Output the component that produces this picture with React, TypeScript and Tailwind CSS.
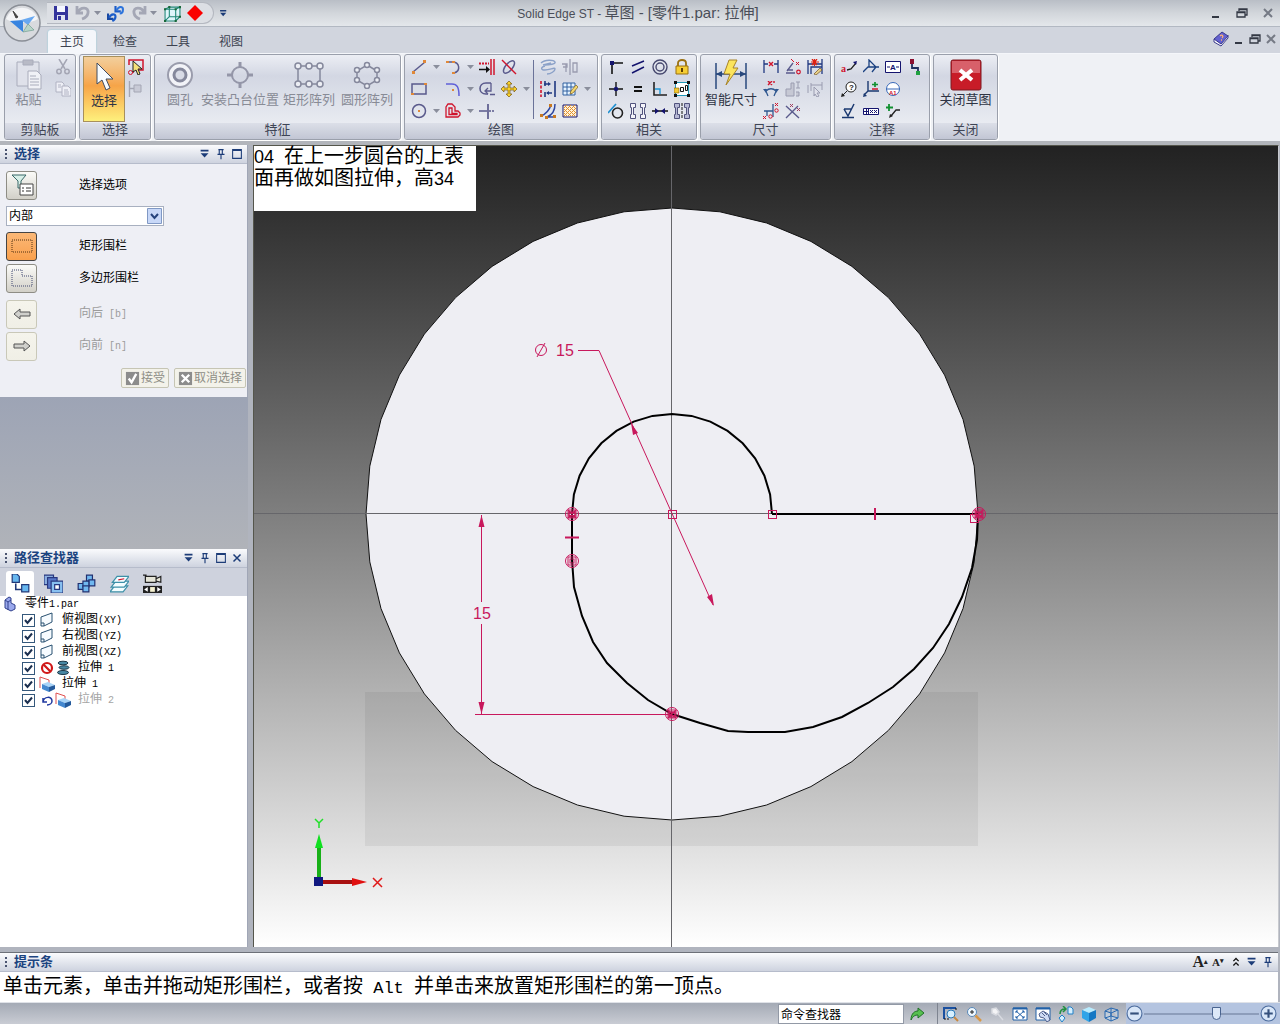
import React, { type ReactNode } from 'react';

const NAVY = '#14146e';
const SLATE = '#5a5a8c';
const RED = '#d0142c';
const DIM = '#9a9cb0';

const art: Record<string, ReactNode> = {
  save: (
    <g>
      <path d="M1 1h13l1 1v13H1z" fill="#34349c" />
      <path d="M4 1h8v6H4z" fill="#f4f6ff" />
      <path d="M4 10h8v5H4z" fill="#dfe3f2" />
      <path d="M5 11h3v4H5z" fill="#34349c" />
    </g>
  ),
  undo: <path d="M2 1v7h6M2.500 7.500C6 1 14 2 13 8c-.5 3-3 5-6 6" stroke="#a4a7b5" strokeWidth="2.800" />,
  redo: <path d="M14 1v7H8M13.500 7.500C10 1 2 2 3 8c.5 3 3 5 6 6" stroke="#a4a7b5" strokeWidth="2.800" />,
  swap: (
    <g strokeWidth="2">
      <path d="M8 1v5h5" stroke="#1c5cc8" />
      <path d="M9 5c2-4 6-4 6-1 0 2-1 4-3 4" stroke="#2c74dc" />
      <path d="M1 8v5h5" stroke="#1848a0" />
      <path d="M2 12c2-4 6-4 6-1 0 2-1 3-3 4" stroke="#1c5cc8" />
    </g>
  ),
  box: (
    <g stroke="#208878">
      <path d="M1 4l4-2h10v9l-4 4H1zM1 4h10v11M11 4l4-2M5 2v9h10M5 11l-4 4" fill="#dff5fa" />
      <path d="M0 3h2v2H0zM4 1h2v2H4zM14 1h2v2h-2zM10 3h2v2h-2zM0 14h2v2H0zM10 14h2v2h-2zM14 10h2v2h-2z" fill="#186838" stroke="none" />
    </g>
  ),
  record: <path d="M8 0l8 8-8 8-8-8z" fill="#fa0000" />,
  cut: (
    <g stroke="#a4a6b4" strokeWidth="1.500">
      <path d="M4 0l6 10M12 0L6 10" />
      <circle cx="4" cy="12.500" r="2.200" />
      <circle cx="12" cy="12.500" r="2.200" />
    </g>
  ),
  copy: (
    <g stroke="#b0b2c2" fill="#eeeff6">
      <path d="M1 1h6l2 2v8H1z" />
      <path d="M7 5h6l3 3v7H7zM9 9h4M9 11h5M9 13h5M3 4h3M3 6h3" />
    </g>
  ),
  selectTool: (
    <g>
      <path d="M1 6V1h14v10h-4M6 13H4" stroke={RED} strokeWidth="1.500" />
      <circle cx="2.500" cy="13.500" r="2" stroke={RED} />
      <path d="M5 2l9 8h-4l2 5-2 1-2-5-3 2z" fill="#f6e27a" stroke="#222" />
    </g>
  ),
  tree: (
    <g stroke="#a4a6b4">
      <path d="M1.500 0v16M1 7.500h5" strokeWidth="1.400" />
      <path d="M6 4h7v7H6z" fill="#c8cad6" />
    </g>
  ),
  line: (
    <g>
      <path d="M2 13L14 3" stroke={SLATE} strokeWidth="1.500" />
      <path d="M1 12h3v3H1zM12 1h3v3h-3z" fill="#e08838" />
    </g>
  ),
  arc: (
    <g>
      <path d="M2 3h5c8 0 9 9 2 11" stroke={SLATE} strokeWidth="1.500" />
      <path d="M1 2h3v2H1zM7 2h3v2H7zM7 13h3v2H7z" fill="#e08838" />
    </g>
  ),
  extend: (
    <g>
      <path d="M12 0v16M15 0v16" stroke={RED} strokeWidth="1.500" />
      <path d="M0 4.500h10" stroke={RED} strokeWidth="2" strokeDasharray="2 1" />
      <path d="M0 10.500h9" stroke="#111" strokeWidth="1.500" />
      <path d="M7 7l4 3.500L7 14z" fill="#111" />
    </g>
  ),
  trim: (
    <g>
      <ellipse cx="8" cy="8" rx="3.500" ry="7.500" transform="rotate(40 8 8)" stroke={SLATE} strokeWidth="1.500" />
      <path d="M1 1l14 14" stroke={RED} strokeWidth="1.500" />
    </g>
  ),
  rect: (
    <g>
      <path d="M1 3h14v10H1z" stroke={SLATE} strokeWidth="1.500" />
      <path d="M0 12h3v2H0zM13 2h3v2h-3z" fill="#e08838" />
    </g>
  ),
  fillet: (
    <g>
      <path d="M1 3h6c5 0 7 3 7 12" stroke="#6060d8" strokeWidth="1.500" />
      <path d="M7 8h2v2H7z" fill="#e08838" />
    </g>
  ),
  trimCorner: (
    <g stroke={SLATE} strokeWidth="1.600">
      <path d="M12 2H7C-1 2 -1 13 7 13h2M11 13.500h5" />
      <path d="M12 2v8H7M9 7l-3 3 3 3" strokeWidth="1.300" />
    </g>
  ),
  move: <path d="M8 0l3 3H9v4h4V5l3 3-3 3V9H9v4h2l-3 3-3-3h2V9H3v2L0 8l3-3v2h4V3H5z" fill="#fad22c" stroke="#7a5a10" strokeWidth=".7" />,
  circle: (
    <g>
      <circle cx="8" cy="8" r="6.500" stroke={SLATE} strokeWidth="1.500" />
      <path d="M7 7h2v2H7z" fill="#e08838" />
    </g>
  ),
  offset: (
    <g strokeWidth="1.300">
      <path d="M1 14V4l2-3h4l3 3v4h3l2 2v2l-2 2z" stroke={RED} />
      <path d="M4 11.500V5h3v5.500h5v1z" stroke={RED} />
    </g>
  ),
  cross: (
    <g stroke={SLATE} strokeWidth="1.700">
      <path d="M0 8h8M9 1v15" />
      <path d="M10 8h6" strokeDasharray="2 1" />
    </g>
  ),
  project: (
    <g stroke="#8ba1c8" strokeWidth="1.400">
      <path d="M1 4c4-4 13-3 14-1s-6 3-10 3" />
      <path d="M5 7c-4 1-5 4 0 4s10-3 10-1-4 5-8 5" />
      <path d="M3 6l8-2" />
    </g>
  ),
  mirror: <path d="M8 0v16M0 5h5v3H1M11 4h4v9h-4zM4 5v8" stroke={DIM} strokeWidth="1.300" />,
  spacing: (
    <g strokeWidth="1.600">
      <path d="M1 0v16" stroke={RED} strokeDasharray="3 1.500" />
      <path d="M15 0v16M5 0v5M5 11v5M4 3h5M12 12H7" stroke="#203880" />
      <path d="M8 1l3 2-3 2zM9 10l-3 2 3 2z" fill="#203880" />
    </g>
  ),
  grid: (
    <g>
      <path d="M1 2h12v12H1zM5 2v12M9 2v12M1 6h12M1 10h12" stroke="#3060a0" fill="#e4f2ff" />
      <path d="M8 13l1-3 5-6 2 2-5 6z" fill="#f4d870" stroke="#806020" strokeWidth=".7" />
    </g>
  ),
  curves: (
    <g>
      <path d="M15 1c0 7-3 11-8 13h8M11 2C9 8 6 11 1 13" stroke="#3048a0" strokeWidth="1.500" />
      <path d="M0 11h3v3H0zM13 12h3v3h-3zM5 13h3v3H5zM9 1h3v3H9z" fill="#c87820" />
    </g>
  ),
  hatch: (
    <g>
      <path d="M1 2h14v12H1z" fill="#fff2d8" stroke={NAVY} />
      <path d="M2 5l3-3M2 9l7-7M2 13l11-11M6 13l8-8M10 13l4-4M2 10l3 3M2 6l7 7M3 3l10 10M7 3l7 7M11 3l3 3" stroke="#e09030" />
    </g>
  ),
  connect: (
    <g>
      <path d="M4 15V4h11" stroke="#111" strokeWidth="1.600" />
      <path d="M2 2h4v4H2z" fill={NAVY} />
    </g>
  ),
  parallel: <path d="M2 7l12-5M2 14l12-6" stroke={NAVY} strokeWidth="1.500" />,
  concentric: (
    <g stroke="#484a70" strokeWidth="1.400">
      <circle cx="8" cy="8" r="7" />
      <circle cx="8" cy="8" r="4" />
    </g>
  ),
  lock: (
    <g>
      <path d="M4 7V4c0-4 8-4 8 0v3" stroke="#9a7010" strokeWidth="1.800" />
      <path d="M2 7h12v8H2z" fill="#f6ce34" stroke="#9a7010" />
      <path d="M7 9h2v4H7z" fill="#604000" />
    </g>
  ),
  plusRel: (
    <g>
      <path d="M8 1v14M1 8h14" stroke="#111" strokeWidth="1.400" />
      <circle cx="8" cy="8" r="2.200" fill={NAVY} />
    </g>
  ),
  equal: <path d="M4 6h8M4 10h8" stroke="#111" strokeWidth="2" />,
  perp: (
    <g>
      <path d="M2 1v13h13" stroke="#222" strokeWidth="1.600" />
      <path d="M3 8h5v5" stroke="#2098d8" strokeWidth="1.400" />
    </g>
  ),
  group: (
    <g>
      <path d="M1.500 1.500h13v13h-13z" stroke="#2098b8" fill="#fff" />
      <path d="M0 0h3v3H0zM13 0h3v3h-3zM0 13h3v3H0zM13 13h3v3h-3z" fill="#111" />
      <path d="M6.500 6.500h3v4h-3zM11.500 4.500h2v5h-2z" stroke="#111" />
      <path d="M0 7h5v5H0z" fill="#f4c830" stroke="#80600c" strokeWidth=".6" />
    </g>
  ),
  tangent: (
    <g>
      <circle cx="9.500" cy="10" r="5" stroke="#222" strokeWidth="1.600" />
      <path d="M0 10L8 1" stroke="#2090d0" strokeWidth="1.700" />
    </g>
  ),
  symmetric: <path d="M.5.500h5v4h-2v7h2v4h-5v-4h1v-7h-1zM15.500.500h-5v4h2v7h-2v4h5v-4h-1v-7h1z" stroke="#50527c" fill="#f4f4fa" />,
  collinear: (
    <g>
      <path d="M0 8h16" stroke="#111" strokeWidth="1.300" />
      <path d="M3 5l4 3-4 3zM13 5L9 8l4 3z" fill={NAVY} />
    </g>
  ),
  symAxis: (
    <g>
      <path d="M.5.500h5v4h-2v7h2v4h-5v-4h1v-7h-1zM15.500.500h-5v4h2v7h-2v4h5v-4h-1v-7h1z" stroke="#50527c" fill="#b6b8d4" />
      <path d="M8 0v16" stroke="#111" strokeDasharray="3 1" />
    </g>
  ),
  distance: (
    <g>
      <path d="M1 1v13M15 1v13M1 5h4M11 5h4" stroke="#203880" strokeWidth="1.300" />
      <path d="M6 3l4 4M10 3L6 7" stroke={RED} strokeWidth="1.400" />
    </g>
  ),
  angleDim: (
    <g>
      <path d="M1 14h9M2 12l6-8M2 11h6" stroke={SLATE} strokeWidth="1.300" />
      <path d="M11 3l3 3M14 3l-3 3M6 0l3 3" stroke={RED} />
      <circle cx="13.500" cy="13" r="1.800" stroke={RED} strokeWidth="1.200" />
    </g>
  ),
  autoDim: (
    <g>
      <path d="M1 1v14M1 5h14M15 0v15M4 15V8h11" stroke="#203880" strokeWidth="1.300" />
      <path d="M5 0l5 6M10 0L5 6M7.500 0v7M4 3h8" stroke="#e02010" strokeWidth="1.200" />
      <path d="M7 15l6-6 2 2-6 5z" fill="#e8d088" stroke="#705020" strokeWidth=".7" />
    </g>
  ),
  angle: (
    <g>
      <path d="M2 8l3 7M14 8l-3 7M3 10c3-3 7-3 10 0" stroke="#305890" strokeWidth="1.300" />
      <path d="M0 8h4l-1 4zM16 8h-4l1 4z" fill="#305890" />
      <path d="M5 0l4 4M9 0L5 4M11 0v2" stroke={RED} strokeWidth="1.400" />
    </g>
  ),
  coordDim: <path d="M1 15V8h5V2h3v13zM11 1h4M13 1v6M11 7h4M11 11h3v4h-3" stroke={DIM} fill="#c6c8d4" />,
  pickDim: <path d="M1 4v8M4 2v8M15 1v8M4 4h11M7 6l6 6h-3l2 3-2 1-2-3-1 2z" stroke={DIM} fill="#dfe0ea" />,
  ordDim: (
    <g>
      <path d="M1 8h9M10 1v13M4 8v5" stroke="#305890" strokeWidth="1.300" />
      <path d="M12 0l3 3M15 0l-3 3M0 13l3 3M3 13l-3 3" stroke={RED} />
      <circle cx="13.500" cy="7.500" r="1.700" stroke={RED} />
      <circle cx="7.500" cy="13.500" r="1.700" stroke={RED} />
    </g>
  ),
  detach: (
    <g>
      <path d="M1 3l13 12M13 3L1 15" stroke={SLATE} strokeWidth="1.400" />
      <path d="M5 1l3 3M8 1L5 4M12 5l3 3M15 5l-3 3" stroke="#a04060" />
    </g>
  ),
  leader: (
    <g>
      <path d="M6 11l4-1 5-6" stroke="#222" strokeWidth="1.300" />
      <path d="M16 2l-1 4-3-3z" fill={NAVY} />
      <text x="0" y="13" fontSize="10" fontWeight="700" fill={RED} fontFamily="Liberation Serif, serif">a</text>
    </g>
  ),
  datum: <path d="M0 13l5-5h11M6 8V1l7 7-4 5" stroke="#1a4080" strokeWidth="1.300" />,
  frame: (
    <g>
      <path d="M.5 2.500h15v11H.5z" fill="#fff" stroke={NAVY} />
      <path d="M2 8h3M11 8h3" stroke={NAVY} />
      <text x="5" y="11" fontSize="8" fontWeight="700" fill={NAVY} fontFamily="Liberation Sans, sans-serif">A</text>
    </g>
  ),
  connector: (
    <g>
      <path d="M5 3v6h6v4" stroke="#203060" strokeWidth="1.800" />
      <path d="M3 0h4v5H3z" fill="#8c1030" />
      <path d="M9 12h4v4H9z" fill="#20a040" />
    </g>
  ),
  balloon: (
    <g>
      <circle cx="10" cy="6" r="5" stroke="#222" fill="#fff" />
      <path d="M6 10l-4 4" stroke="#222" />
      <path d="M0 16l1-4 3 3z" fill="#222" />
      <text x="8" y="9" fontSize="8" fontWeight="700" fill="#222" fontFamily="Liberation Sans, sans-serif">?</text>
    </g>
  ),
  tolerance: (
    <g>
      <path d="M5 0v10h11M5 10l-4 4" stroke="#1a3870" strokeWidth="1.400" />
      <path d="M0 16l1-4 3 3z" fill="#1a3870" />
      <path d="M12 1v5M9 3.500h6" stroke="#109030" strokeWidth="1.700" />
      <path d="M9 8h6" stroke={RED} strokeWidth="1.500" />
    </g>
  ),
  datumTarget: (
    <g>
      <circle cx="8" cy="8" r="6.500" stroke="#3868b8" fill="#fff" />
      <path d="M1 8h14" stroke="#3868b8" />
      <text x="4" y="14" fontSize="6" fontWeight="700" fill={RED} fontFamily="Liberation Sans, sans-serif">A1</text>
    </g>
  ),
  surface: <path d="M1 14.500h12M3 6l4 7 6-12M3 6h8" stroke="#1a3870" strokeWidth="1.500" />,
  fcf: (
    <g stroke={NAVY}>
      <path d="M.5 5.500h15v6H.5zM5.500 5v6" fill="#fff" />
      <path d="M1 8.500h4M3.500 6v5M7 7l3 3M10 7l-3 3M11 7l3 3M14 7l-3 3" />
    </g>
  ),
  addLeader: (
    <g>
      <path d="M15 7h-4l-5 6" stroke="#222" strokeWidth="1.300" />
      <path d="M4 15l1-4 3 2z" fill="#222" />
      <path d="M4 1v7M1 4.500h7" stroke="#109030" strokeWidth="1.800" />
    </g>
  ),
  help: (
    <g>
      <path d="M1 8v3l7 4 7-8V4" fill="#fff" stroke="#38388c" />
      <path d="M1 8l8-7 6 4-7 8z" fill="#6462d0" stroke="#38388c" />
      <path d="M7 5c2-2 4 0 2 2M8 9h1" stroke="#ffb070" strokeWidth="1.300" />
    </g>
  ),
  min: <path d="M4 12h7" stroke="#333844" strokeWidth="2" />,
  restore: <path d="M5 6V4h8v6h-2M3 7h8v5H3zM5 4.500h8M3 7.500h8" stroke="#333844" strokeWidth="1.300" />,
  close: <path d="M4 4l8 8M12 4l-8 8" stroke="#757a85" strokeWidth="2" />,
  drop: (
    <g fill="#1c3c78">
      <path d="M3 3h9v2H3zM3 7h9l-4.500 5z" />
    </g>
  ),
  pin: <path d="M5 3h6M6 3v5M9.500 3v5M4 8.500h8M8 9v5" stroke="#1c3c78" strokeWidth="1.300" />,
  max: <path d="M3 3h10v10H3zM3 4h10" stroke="#1c3c78" strokeWidth="1.200" />,
  shut: <path d="M4 4l8 8M12 4l-8 8" stroke="#1c3c78" strokeWidth="1.700" />,
  up2: <path d="M5 7l3-3 3 3M5 12l3-3 3 3" stroke="#111" strokeWidth="1.500" />,
  plane: <path d="M2 5l11-4v9L5 14H2zM2 11h3v3" stroke="#285070" fill="#f6fbff" />,
  part: <path d="M3 4l4-3 2 1v5l4 2v4l-4 2-6-3zM3 4l3 2v8M6 6l3-2" fill="#9aa8ec" stroke="#30408c" />,
  forbid: (
    <g stroke="#d01818" strokeWidth="2.200">
      <circle cx="8" cy="8" r="5" />
      <path d="M4.500 4.500l7 7" />
    </g>
  ),
  spring: (
    <g fill="#4888a4" stroke="#1c3848">
      <ellipse cx="8" cy="3" rx="5" ry="1.800" />
      <ellipse cx="9" cy="7.500" rx="5" ry="1.800" />
      <ellipse cx="8" cy="12.500" rx="5.500" ry="2" />
    </g>
  ),
  extrude: (
    <g>
      <path d="M1 12V1l9 3v4" stroke="#e05050" />
      <path d="M3 8l6-2 7 3-6 2z" fill="#a8d4f8" />
      <path d="M3 8l7 3v5l-7-3z" fill="#4488d0" />
      <path d="M10 11l6-2v4l-6 3z" fill="#245a9c" />
    </g>
  ),
  back: <path d="M4 6v4h4M4 10c1-6 9-6 9-1 0 2-2 4-5 4" stroke="#2038a0" strokeWidth="1.500" />,
  go: <path d="M2 14C2 7 6 5 9 5V2l6 5-6 5V9c-3 0-5 1-7 5z" fill="#58c050" stroke="#207028" />,
  zoomArea: (
    <g>
      <path d="M1 13V2h12" stroke="#1a50a0" strokeWidth="2" />
      <path d="M1 13h6M13 2v3" stroke="#111" strokeDasharray="2 1" />
      <circle cx="8" cy="8" r="4" fill="#d6f0ff" stroke="#2878b8" />
      <path d="M11 11l4 4" stroke="#c88840" strokeWidth="2" />
    </g>
  ),
  zoom: (
    <g>
      <circle cx="6" cy="6" r="4.500" fill="#eef8ff" stroke="#5888b8" />
      <path d="M4 6h4M6 4v4" stroke="#222" />
      <path d="M9.500 9.500L15 15" stroke="#d89848" strokeWidth="2.500" />
    </g>
  ),
  wand: <path d="M3 3l4-1 3 4-3 3-4-2zM9 8l5 6" stroke="#d8dae0" fill="#f4f4f6" strokeWidth="1.500" />,
  fit: (
    <g>
      <path d="M1 2h14v12H1z" fill="#fff" stroke="#2060a8" />
      <path d="M1 2.500h14" stroke="#2060a8" strokeWidth="2" />
      <path d="M4 5l8 7M12 5l-8 7M4 7V5h2M12 7V5h-2M4 10v2h2M12 10v2h-2" stroke="#2060a8" />
    </g>
  ),
  pan: (
    <g>
      <path d="M1 2h14v12H1z" fill="#fff" stroke="#2060a8" />
      <path d="M1 2.500h14" stroke="#2060a8" strokeWidth="2" />
      <path d="M4 8l4-3 5 3 2 6-3 2-3-4-4-1zM7 7l3 3M9 6l3 3" fill="#d0dcf4" stroke="#50608c" />
    </g>
  ),
  rotate: (
    <g>
      <path d="M2 8c0-4 2-5 5-5M5 0l3 3-3 3" stroke="#209040" strokeWidth="1.500" />
      <path d="M10 1h3l2 2v5h-5zM1 12l3-3 3 3-3 4z" fill="#d4efff" stroke="#2080c8" />
    </g>
  ),
  cube: (
    <g>
      <path d="M8 1l7 3-7 3-7-3z" fill="#b8ecff" />
      <path d="M1 4l7 3v9l-7-4z" fill="#30a4e8" />
      <path d="M15 4L8 7v9l7-4z" fill="#1478c4" />
    </g>
  ),
  wire: <path d="M1 5l6 2v8l-6-3zM7 7l7-3v8l-7 3M1 5l6-3 7 2M7 2v8l7 2M7 10l-6 2" stroke="#2868b0" fill="#cfe6fa" fillOpacity=".4" />,
  minus: (
    <g>
      <circle cx="8" cy="8" r="7" fill="#d8e6f8" stroke="#4a6a9c" />
      <path d="M4 8h8" stroke="#34507c" strokeWidth="2" />
    </g>
  ),
  plus: (
    <g>
      <circle cx="8" cy="8" r="7" fill="#d8e6f8" stroke="#4a6a9c" />
      <path d="M4 8h8M8 4v8" stroke="#34507c" strokeWidth="2" />
    </g>
  ),
  tabTree: (
    <g>
      <path d="M4 8v5h5" stroke="#203878" strokeWidth="1.300" />
      <path d="M1 0h4l2 2v5H1zM9 9h6v6H9z" fill="#68b8f0" stroke="#203878" />
    </g>
  ),
  tabLib: (
    <g stroke="#283880">
      <path d="M0 1h8v8H0z" fill="#8cb0e0" />
      <path d="M3 3h8v9H3z" fill="#5878c8" />
      <path d="M6 6h10v10H6z" fill="#88c0f0" />
      <path d="M9 9h4v4H9z" fill="#fff" />
    </g>
  ),
  tabFamily: (
    <g fill="#70b8f0" stroke="#203070">
      <path d="M8 1h5v5H8z" />
      <path d="M10 5h5v5h-5z" />
      <path d="M1 8h5v5H1z" />
      <path d="M5 6h5v5H5z" />
      <path d="M5 10h5v5H5z" />
    </g>
  ),
  tabLayers: (
    <g fill="#f2fdff" stroke="#3c90a8">
      <path d="M0 15l4-5h11l-4 5z" />
      <path d="M1 11l4-5h11l-4 5z" />
      <path d="M2 7l4-5h10l-4 5z" />
      <path d="M7 5l5-1" stroke={RED} />
    </g>
  ),
  tabSensor: (
    <g>
      <path d="M2 2h9v5H2zM11 4l4-2v5l-4-1M0 1h3" stroke="#222" fill="#e6e6d8" />
      <path d="M0 10h16v6H0z" fill="#222" />
      <path d="M6 11h4v4H6z" fill="#f4f0d0" />
      <path d="M4 11v4l-3-2zM12 11v4l3-2z" fill="#fff" />
    </g>
  ),
};

function Icon({ name, className = 'size-4' }: { name: string; className?: string }) {
  return (
    <svg viewBox="0 0 16 16" fill="none" aria-hidden="true" className={`block shrink-0 ${className}`}>
      {art[name]}
    </svg>
  );
}

function Caret({ label }: { label: string }) {
  return (
    <button aria-label={label} className="grid h-[22px] w-3 place-items-center">
      <svg viewBox="0 0 7 4" className="h-1 w-[7px]" aria-hidden="true">
        <path d="M0 0h7L3.500 4z" fill="#8a8e9c" />
      </svg>
    </button>
  );
}

function Tool({ name, label, disabled }: { name: string; label: string; disabled?: boolean }) {
  return (
    <button aria-label={label} disabled={disabled} className="grid size-[22px] place-items-center">
      <Icon name={name} />
    </button>
  );
}

function Group({ title, className, children }: { title: string; className: string; children: ReactNode }) {
  return (
    <section
      aria-label={title}
      className={`flex shrink-0 flex-col overflow-hidden rounded-[3px] border border-[#9a9fab] bg-linear-to-b from-[#eceef4] from-0% via-[#d3d7e3] via-25% to-[#f0f2f6] shadow-[1px_1px_0_#fff] ${className}`}
    >
      <div className="flex flex-1 pt-px">{children}</div>
      <h2 className="h-4 bg-linear-to-b from-[#dcdfe8] to-[#c2c6d4] text-center text-[13px] leading-[14px] text-[#3f4555]">{title}</h2>
    </section>
  );
}

function BigButton({ label, disabled, className = '', children }: { label: string; disabled?: boolean; className?: string; children: ReactNode }) {
  return (
    <button
      disabled={disabled}
      className={`flex h-[66px] flex-col items-center pt-[2px] text-[13px] leading-4 whitespace-nowrap text-[#2e3444] disabled:text-[#888b96] ${className}`}
    >
      <span className="grid h-[34px] place-items-center">{children}</span>
      {label}
    </button>
  );
}

const drawTools: [string, string, boolean][][] = [
  [['line', '直线', true], ['arc', '圆弧', true], ['extend', '延伸', false], ['trim', '修剪', false]],
  [['rect', '矩形', false], ['fillet', '倒圆', true], ['trimCorner', '修剪拐角', false], ['move', '移动', true]],
  [['circle', '圆', true], ['offset', '偏置', true], ['cross', '分割', false]],
];
const relations = ['connect', 'parallel', 'concentric', 'lock', 'plusRel', 'equal', 'perp', 'group', 'tangent', 'symmetric', 'collinear', 'symAxis'];
const dims = ['distance', 'angleDim', 'autoDim', 'angle', 'coordDim', 'pickDim', 'ordDim', 'detach'];
const notes = ['leader', 'datum', 'frame', 'connector', 'balloon', 'tolerance', 'datumTarget', '', 'surface', 'fcf', 'addLeader'];

function Ribbon() {
  return (
    <div className="flex h-[92px] gap-[3px] border-t border-b-4 border-t-[#f4f6fa] border-b-[#b2b5bb] bg-[#eff1f5] px-1 pb-px">
      <Group title="剪贴板" className="w-[72px]">
        <BigButton label="粘贴" disabled className="w-[47px]">
          <svg viewBox="0 0 28 32" className="h-8 w-7" fill="#dfe1ea" stroke="#a9acbb" aria-hidden="true">
            <path d="M2 3h22v24H2z" />
            <path d="M8 1h10v5H8z" fill="#b8bac6" />
            <path d="M13 12h9l4 4v14H13z" fill="#f0f1f6" />
            <path d="M15 17h6M15 20h9M15 23h9M15 26h9" />
          </svg>
        </BigButton>
        <div>
          <Tool name="cut" label="剪切" disabled />
          <Tool name="copy" label="复制" disabled />
        </div>
      </Group>
      <Group title="选择" className="w-[72px]">
        <BigButton
          label="选择"
          className="ml-[3px] w-[42px] border border-[#a8905c] bg-linear-to-b from-[#f2cf9c] via-[#f6a448] via-45% to-[#fdf07c]"
        >
          <svg viewBox="0 0 20 30" className="h-[30px] w-5" aria-hidden="true">
            <path d="M3 2v21l5-4 4 10 4-2-4-9h7z" fill="#f8fcff" stroke="#404c60" />
          </svg>
        </BigButton>
        <div>
          <Tool name="selectTool" label="选择工具" />
          <Tool name="tree" label="选择过滤器" disabled />
        </div>
      </Group>
      <Group title="特征" className="w-[247px]">
        <div className="flex gap-1 pl-2">
          <BigButton label="圆孔" disabled className="px-[3px]">
            <svg viewBox="0 0 28 28" className="size-7" fill="none" aria-hidden="true">
              <circle cx="14" cy="14" r="12" fill="#f2f3f8" stroke="#9a9cac" strokeWidth="2" />
              <circle cx="14" cy="14" r="6" fill="#d8dbe6" stroke="#85889c" strokeWidth="3" />
            </svg>
          </BigButton>
          <BigButton label="安装凸台位置" disabled>
            <svg viewBox="0 0 28 28" className="size-7" fill="none" stroke="#9496a8" strokeWidth="2" aria-hidden="true">
              <circle cx="14" cy="14" r="8" />
              <path d="M14 1v6M14 21v6M1 14h6M21 14h6" strokeWidth="3" />
            </svg>
          </BigButton>
          <BigButton label="矩形阵列" disabled>
            <svg viewBox="0 0 30 28" className="h-7 w-[30px]" fill="#eceef4" stroke="#85889c" strokeWidth="1.500" aria-hidden="true">
              <path d="M4 5h22v18H4z" fill="none" />
              {[4, 15, 26].map((x) => (
                <g key={x}>
                  <circle cx={x} cy="5" r="3" />
                  <circle cx={x} cy="23" r="3" />
                </g>
              ))}
            </svg>
          </BigButton>
          <BigButton label="圆形阵列" disabled className="ml-[2px]">
            <svg viewBox="0 0 28 28" className="size-7" fill="#eceef4" stroke="#85889c" strokeWidth="1.500" aria-hidden="true">
              <path d="M14 4l10 6v9l-10 6-10-6v-9z" fill="none" />
              <circle cx="14" cy="4" r="2.500" />
              <circle cx="24" cy="9" r="2.500" />
              <circle cx="24" cy="19" r="2.500" />
              <circle cx="14" cy="25" r="2.500" />
              <circle cx="4" cy="19" r="2.500" />
              <circle cx="4" cy="9" r="2.500" />
            </svg>
          </BigButton>
        </div>
      </Group>
      <Group title="绘图" className="w-[194px]">
        <div className="grid auto-rows-[22px] grid-cols-[34px_34px_22px_34px] pl-[3px]">
          {drawTools.flat().map(([name, label, more]) => (
            <div key={name} className="flex">
              <Tool name={name} label={label} />
              {more && <Caret label={`${label}选项`} />}
            </div>
          ))}
        </div>
        <div className="my-1 mr-[3px] ml-px w-px bg-[#6a7298]" />
        <div className="grid auto-rows-[22px] grid-cols-[22px_34px] content-start">
          <Tool name="project" label="投影到草图" disabled />
          <Tool name="mirror" label="镜像" disabled />
          <Tool name="spacing" label="拉伸" />
          <div className="flex">
            <Tool name="grid" label="网格" />
            <Caret label="网格选项" />
          </div>
          <Tool name="curves" label="转换为曲线" />
          <Tool name="hatch" label="填充" />
        </div>
      </Group>
      <Group title="相关" className="w-[96px]">
        <div className="grid auto-rows-[22px] grid-cols-4 pl-[3px]">
          {relations.map((n) => (
            <Tool key={n} name={n} label={n} />
          ))}
        </div>
      </Group>
      <Group title="尺寸" className="w-[131px]">
        <BigButton label="智能尺寸" className="ml-1">
          <svg viewBox="0 0 32 32" className="size-8" aria-hidden="true">
            <path d="M1 4v26M31 4v26M1 15h30" stroke="#28487c" strokeWidth="1.500" />
            <path d="M1 15l6-3v6zM31 15l-6-3v6z" fill="#28487c" />
            <path d="M14 1h8l-4 8h5L11 26l4-11H9z" fill="#fbe45c" stroke="#a88428" />
          </svg>
        </BigButton>
        <div className="grid auto-rows-[22px] grid-cols-3 pl-[3px]">
          {dims.map((n) => (
            <Tool key={n} name={n} label={n} />
          ))}
        </div>
      </Group>
      <Group title="注释" className="w-[96px]">
        <div className="grid auto-rows-[22px] grid-cols-4 pl-[3px]">
          {notes.map((n, i) => (n ? <Tool key={n} name={n} label={n} /> : <span key={i} />))}
        </div>
      </Group>
      <Group title="关闭" className="w-[65px]">
        <BigButton label="关闭草图" className="w-full">
          <svg viewBox="0 0 32 32" className="size-8" aria-hidden="true">
            <rect x="1" y="1" width="30" height="30" rx="2" fill="#c81c28" stroke="#7c1820" />
            <path d="M2 2h28v12H2z" fill="#d8606a" />
            <path d="M10 11l12 10M22 11L10 21" stroke="#fff" strokeWidth="4" />
          </svg>
        </BigButton>
      </Group>
    </div>
  );
}

function Header({ title, icons, children }: { title: string; icons: string[]; children?: ReactNode }) {
  return (
    <header className="flex h-[19px] shrink-0 items-center border-b border-[#b6bccb] bg-linear-to-b from-[#fafbfd] to-[#ced3df] pr-[2px] pl-[5px]">
      <svg viewBox="0 0 2 10" className="h-[10px] w-[2px]" aria-hidden="true">
        <path d="M0 0h2v2H0zM0 4h2v2H0zM0 8h2v2H0z" fill="#4a5470" />
      </svg>
      <h2 className="ml-[7px] flex-1 text-[13px] leading-4 font-bold text-[#1c4480]">{title}</h2>
      {children}
      {icons.map((n) => (
        <button key={n} aria-label={n} className="grid w-4 place-items-center">
          <Icon name={n} className="size-[14px]" />
        </button>
      ))}
    </header>
  );
}

function OptionRow({ label, latin, disabled, pressed, children }: { label: string; latin?: string; disabled?: boolean; pressed?: boolean; children: ReactNode }) {
  return (
    <button disabled={disabled} aria-pressed={pressed} className="group flex h-[30px] items-center gap-[42px] text-black disabled:text-[#9b9b9b]">
      <span className="grid h-[29px] w-[31px] place-items-center rounded-[3px] border border-[#8e8d85] bg-linear-to-b from-[#fbfbf8] to-[#d2d0c8] group-disabled:border-[#c9c8b8] group-disabled:from-[#f5f4ec] group-disabled:to-[#f0efe6] group-aria-pressed:border-[#444] group-aria-pressed:from-[#fbb877] group-aria-pressed:to-[#f9a04c]">
        <svg viewBox="0 0 24 24" className="size-6" fill="none" aria-hidden="true">
          {children}
        </svg>
      </span>
      <span>
        {label}
        {latin && <span className="font-['Liberation_Mono',monospace] text-[10px] whitespace-pre"> {latin}</span>}
      </span>
    </button>
  );
}

function SelectPanel() {
  return (
    <section className="border-r border-[#a0a6b6] bg-[#eeeff5] text-[12px] leading-4">
      <Header title="选择" icons={['drop', 'pin', 'max']} />
      <div className="flex flex-col items-start px-[6px] pt-[6px] pb-[9px]">
        <OptionRow label="选择选项">
          <path d="M2 2h14l-5 6v7H8V8z" fill="#d8f0e8" stroke="#386868" />
          <path d="M10 11h13v11H10z" fill="#fff" stroke="#444" />
          <path d="M12 15h2M16 15h5M12 18h2M16 18h5" stroke="#333" />
        </OptionRow>
        <div className="mt-[6px] grid h-5 w-[158px] items-center">
          <select aria-label="选择范围" defaultValue="inner" className="col-start-1 row-start-1 h-5 w-full appearance-none border border-[#a8b0c0] bg-white pl-[2px] text-[12px]">
            <option value="inner">内部</option>
          </select>
          <svg viewBox="0 0 15 16" className="pointer-events-none col-start-1 row-start-1 mr-[2px] h-4 w-[15px] justify-self-end" aria-hidden="true">
            <path d="M.5.500h14v15H.5z" fill="#c8d8f8" stroke="#8098c4" />
            <path d="M4 6l3.500 4L11 6" fill="none" stroke="#26437c" strokeWidth="2" />
          </svg>
        </div>
        <div className="mt-[5px] flex flex-col items-start gap-[2px]">
          <OptionRow label="矩形围栏" pressed>
            <path d="M2 6h20v12H2z" stroke="#503010" strokeDasharray="1 1" />
          </OptionRow>
          <OptionRow label="多边形围栏">
            <path d="M2 4h10v6h10v10H2z" stroke="#404870" strokeDasharray="1 1" />
          </OptionRow>
        </div>
        <div className="mt-[6px] flex flex-col items-start gap-[2px]">
          <OptionRow label="向后" latin="[b]" disabled>
            <path d="M4 12l6-5v3h10v4H10v3z" fill="#d0d0cc" stroke="#555" />
          </OptionRow>
          <OptionRow label="向前" latin="[n]" disabled>
            <path d="M20 12l-6-5v3H4v4h10v3z" fill="#d0d0cc" stroke="#555" />
          </OptionRow>
        </div>
        <div className="-mr-[5px] mt-[7px] flex gap-[5px] self-end text-[#8e8e86]">
          {[
            ['接受', 'M4 8l3 4 5-9'],
            ['取消选择', 'M4 4l8 8M12 4l-8 8'],
          ].map(([label, d]) => (
            <button key={label} disabled className="flex h-5 items-center gap-px rounded-[2px] border border-[#c6c5b4] bg-[#f3f2ea] px-[3px] whitespace-nowrap">
              <svg viewBox="0 0 16 16" className="size-[15px]" aria-hidden="true">
                <path d="M1 1h14v14H1z" fill="#8c8c8c" />
                <path d={d} fill="none" stroke="#fff" strokeWidth="2.500" />
              </svg>
              {label}
            </button>
          ))}
        </div>
      </div>
    </section>
  );
}

const nodes: { icons: string[]; cjk: string; latin: string; dim?: boolean }[] = [
  { icons: ['plane'], cjk: '俯视图', latin: '(XY)' },
  { icons: ['plane'], cjk: '右视图', latin: '(YZ)' },
  { icons: ['plane'], cjk: '前视图', latin: '(XZ)' },
  { icons: ['forbid', 'spring'], cjk: '拉伸', latin: ' 1' },
  { icons: ['extrude'], cjk: '拉伸', latin: ' 1' },
  { icons: ['back', 'extrude'], cjk: '拉伸', latin: ' 2', dim: true },
];

function Pathfinder() {
  return (
    <section className="flex min-h-0 flex-1 flex-col border-r border-[#a0a6b6] bg-white text-[12px]">
      <Header title="路径查找器" icons={['drop', 'pin', 'max', 'shut']} />
      <div role="tablist" aria-label="路径查找器" className="flex h-7 items-end gap-[5px] bg-[#ced2dd] pl-[6px]">
        {['tabTree', 'tabLib', 'tabFamily', 'tabLayers', 'tabSensor'].map((n, i) => (
          <button key={n} role="tab" aria-selected={i === 0} aria-label={n} className="grid h-[25px] w-7 place-items-center rounded-t-[3px] aria-selected:bg-white">
            <Icon name={n} className="size-[19px]" />
          </button>
        ))}
      </div>
      <div className="flex h-4 items-center gap-[7px] pl-[2px]">
        <Icon name="part" />
        <span className="leading-4">
          零件<span className="font-['Liberation_Mono',monospace] text-[10px]">1.par</span>
        </span>
      </div>
      <ul>
        {nodes.map((n, i) => (
          <li key={i}>
            <label className={`flex h-4 items-center pl-[22px] leading-4 ${n.dim ? 'text-[#a4a4a4]' : 'text-black'}`}>
              <span className="mr-1 grid">
                <input type="checkbox" defaultChecked className="peer col-start-1 row-start-1 size-[13px] appearance-none border border-[#35597c] bg-white" />
                <svg viewBox="0 0 13 13" className="pointer-events-none invisible col-start-1 row-start-1 size-[13px] peer-checked:visible" fill="none" aria-hidden="true">
                  <path d="M3 6l2.500 3L10 3.500" stroke="#1c3050" strokeWidth="2" />
                </svg>
              </span>
              {n.icons.map((ic) => (
                <Icon key={ic} name={ic} />
              ))}
              <span className="ml-[7px]">
                {n.cjk}
                <span className="font-['Liberation_Mono',monospace] text-[10px] whitespace-pre">{n.latin}</span>
              </span>
            </label>
          </li>
        ))}
      </ul>
    </section>
  );
}

const ring = (r: number, n: number, from: number, to: number) =>
  Array.from({ length: to - from + 1 }, (_, i) => {
    const a = ((from + i) * 2 * Math.PI) / n;
    return `${(672 + r * Math.cos(a)).toFixed(1)},${(514 - r * Math.sin(a)).toFixed(1)}`;
  }).join(' ');

function Handle({ x, y, solid }: { x: number; y: number; solid?: boolean }) {
  return (
    <g stroke="#c8185c" fill="none">
      <circle cx={x} cy={y} r="6.500" />
      <rect x={x - 4} y={y - 4} width="8" height="8" />
      {solid ? (
        <path d={`M${x - 4} ${y - 4}l8 8M${x + 4} ${y - 4}l-8 8M${x - 3} ${y - 2}h6v5h-6z`} strokeWidth="1.500" />
      ) : (
        <rect x={x - 2} y={y - 2} width="4" height="4" />
      )}
    </g>
  );
}

function Canvas() {
  return (
    <main className="relative mr-px min-w-0 flex-1 border-t border-r border-l border-[#55564c] border-r-[#c8cacf] bg-linear-to-b from-[#222] to-white">
      <svg viewBox="254 146 1024 801" className="absolute inset-0 size-full" fill="none" role="img" aria-label="草图">
        <rect x="365" y="692" width="613" height="154" fill="#000" fillOpacity=".055" />
        <polygon points={ring(306, 40, 0, 39)} fill="#eeeef3" stroke="#111" />
        <path d="M254 513.500H1278M671.500 146V947" stroke="#66666a" />
        <g stroke="#000" strokeWidth="2">
          <polyline points={ring(100, 32, 0, 16)} />
          <path d="M772 514H978M572 514V560L574 587 582 616 593 642 607 663 627 683 648 700 672 714 700 723 728 731 748 732H785L813 727 842 717 868 703 893 687 914 669 933 648 949 624 962 597 972 568 977 540 978 514" />
        </g>
        <g stroke="#c8185c">
          <path d="M578 350.500H599L713 605M481.500 515V602M481.500 624V714M475 714.500H672" />
          <path d="M565 537.500H579M875 508V520" strokeWidth="2" />
          <g fill="#c8185c" stroke="none">
            <path d="M631 423l7 10-5 2zM714 606l-2-12-5 3zM481.500 515l3 12h-6zM481.500 714l3-12h-6z" />
          </g>
          <rect x="668.500" y="510.500" width="8" height="8" />
          <rect x="768.500" y="510.500" width="8" height="8" />
          <rect x="970.500" y="514.500" width="8" height="8" />
          <circle cx="541" cy="350" r="5.500" />
          <path d="M537 357l8-14" />
        </g>
        <Handle x={572} y={514} solid />
        <Handle x={572} y={561} />
        <Handle x={672} y={714} solid />
        <Handle x={979} y={514} solid />
        <g fill="#c8185c" fontFamily="Liberation Sans, sans-serif" fontSize="16">
          <text x="556" y="356">15</text>
          <text x="473" y="619">15</text>
        </g>
        <path d="M319 882V845" stroke="#18b018" strokeWidth="4" />
        <path d="M319 834l4 14h-8z" fill="#10e020" />
        <path d="M319 882H356" stroke="#a81010" strokeWidth="4" />
        <path d="M367 882l-15-4v8z" fill="#e01010" />
        <path d="M314 877h9v9h-9z" fill="#101880" />
        <path d="M315 819l4 4 4-4M319 823v5" stroke="#20e028" strokeWidth="1.500" />
        <path d="M373 878l9 9M382 878l-9 9" stroke="#e01818" strokeWidth="1.500" />
      </svg>
      <p className="absolute top-0 left-0 h-[65px] w-[222px] bg-white text-[20px] leading-[21px] whitespace-pre text-black">
        <span className="text-[18px]">04  </span>在上一步圆台的上表
        <br />
        面再做如图拉伸，高<span className="text-[18px]">34</span>
      </p>
    </main>
  );
}

export default function App() {
  return (
    <div className="flex h-screen flex-col overflow-hidden bg-[#b0b4be] font-['Liberation_Sans','Noto_Sans_CJK_SC',sans-serif] text-black">
      <div className="flex h-[27px] shrink-0 items-center border-b border-[#b2b8c2] bg-linear-to-b from-[#b9bec6] via-[#d2d6db] to-[#e4e7eb] pr-1">
        <div className="flex flex-1 items-center">
          <div className="relative ml-[3px] h-[26px] w-10">
            <button aria-label="应用程序菜单" className="absolute top-1 left-0">
              <svg viewBox="0 0 38 38" className="size-[38px]" aria-hidden="true">
                <circle cx="19" cy="19" r="18" fill="#d8dade" stroke="#8a8e96" strokeWidth="1.500" />
                <path d="M3 15a17 17 0 0132 0c-8 5-24 5-32 0z" fill="#f4f5f7" />
                <path d="M7 17l13-1v12z" fill="#3884e0" />
                <path d="M18 16l14-4-7 9z" fill="#68a8f0" />
                <path d="M20 28l5-8 6 6z" fill="#b8d4c8" stroke="#508878" strokeWidth=".5" />
                <path d="M10 7l5 6-2 1z" fill="#444" stroke="#444" />
              </svg>
            </button>
          </div>
          <div className="ml-1 flex h-[22px] items-center rounded-r-full border border-l-0 border-[#b4b8c0] bg-[#dcdfe4] pr-[10px] pl-[6px]">
            <button aria-label="保存"><Icon name="save" /></button>
            <button aria-label="撤消" disabled className="ml-[6px]"><Icon name="undo" /></button>
            <Caret label="撤消列表" />
            <button aria-label="更新" className="mx-1"><Icon name="swap" className="size-[17px]" /></button>
            <button aria-label="重做" disabled className="ml-[3px]"><Icon name="redo" /></button>
            <Caret label="重做列表" />
            <button aria-label="视图方向" className="ml-[5px]"><Icon name="box" className="size-[17px]" /></button>
            <button aria-label="录制" className="ml-[6px]"><Icon name="record" /></button>
          </div>
          <button aria-label="自定义" className="ml-1"><Icon name="drop" className="size-[11px]" /></button>
        </div>
        <h1 className="text-[12px] whitespace-pre text-[#4a4e58]">
          Solid Edge ST - <span className="text-[15px]">草图 - [零件1.par: 拉伸]</span>
        </h1>
        <div className="flex flex-1 justify-end gap-[10px]">
          {['min', 'restore', 'close'].map((n) => (
            <button key={n} aria-label={n}><Icon name={n} /></button>
          ))}
        </div>
      </div>
      <div className="flex h-[26px] shrink-0 items-end bg-[#d1d5de] pl-12">
        <nav className="flex flex-1 gap-[5px]" role="tablist" aria-label="功能区">
          {['主页', '检查', '工具', '视图'].map((t, i) => (
            <button
              key={t}
              role="tab"
              aria-selected={i === 0}
              className="h-[23px] w-12 rounded-t-[3px] text-[12px] text-[#3c4250] aria-selected:bg-[#f4f6fa] aria-selected:shadow-[0_0_2px_#88c8d8]"
            >
              {t}
            </button>
          ))}
        </nav>
        <div className="flex items-center pr-px pb-[6px]">
          <button aria-label="帮助" className="mr-[2px]"><Icon name="help" /></button>
          {['min', 'restore', 'close'].map((n) => (
            <button key={n} aria-label={n}><Icon name={n} /></button>
          ))}
        </div>
      </div>
      <Ribbon />
      <div className="flex min-h-0 flex-1">
        <aside className="mr-[5px] flex w-[248px] shrink-0 flex-col bg-[#a2a9b9]">
          <SelectPanel />
          <div className="h-[152px] shrink-0 bg-linear-to-b from-[#9da4b5] to-[#b0b3b9]" />
          <Pathfinder />
        </aside>
        <Canvas />
      </div>
      <section className="mt-[5px] mr-[2px] shrink-0 border-t border-[#6c7078] bg-white">
        <Header title="提示条" icons={['up2', 'drop', 'pin']}>
          <button aria-label="增大字体" className="mr-1 font-['Liberation_Serif',serif] text-[16px] leading-4 font-bold text-[#222]">
            A<sup className="text-[7px]">▴</sup>
          </button>
          <button aria-label="减小字体" className="mr-1 font-['Liberation_Serif',serif] text-[11px] leading-4 font-bold text-[#222]">
            A<sup className="text-[7px]">▾</sup>
          </button>
        </Header>
        <p className="h-[30px] pl-[3px] text-[20px] leading-7 whitespace-nowrap">
          单击元素，单击并拖动矩形围栏，或者按<span className="font-['Liberation_Mono',monospace] text-[17px] whitespace-pre"> Alt </span>并单击来放置矩形围栏的第一顶点。
        </p>
      </section>
      <footer className="flex h-[22px] shrink-0 items-center justify-end border-t border-[#dfe2e8] bg-linear-to-b from-[#a4aab5] to-[#c9ccd4]">
        <input aria-label="命令查找器" defaultValue="命令查找器" className="h-5 w-[126px] border border-[#9299a6] bg-white px-[2px] text-[12px]" />
        <button aria-label="查找" className="mx-[5px]"><Icon name="go" /></button>
        <div className="ml-[7px] flex h-full items-center gap-[7px] border-l border-[#7e8490] pl-[5px]">
          {['zoomArea', 'zoom', 'wand', 'fit', 'pan', 'rotate', 'cube', 'wire'].map((n) => (
            <button key={n} aria-label={n}><Icon name={n} /></button>
          ))}
        </div>
        <div className="ml-[6px] flex h-full items-center gap-px bg-[#b4c4e0] pr-[3px]">
          <button aria-label="缩小"><Icon name="minus" className="size-[17px]" /></button>
          <input
            type="range"
            aria-label="缩放"
            min="0"
            max="100"
            defaultValue="64"
            className="h-4 w-[115px] appearance-none bg-linear-to-b from-transparent from-45% via-[#4c5c7c] via-50% to-transparent to-55% [&::-webkit-slider-thumb]:h-[13px] [&::-webkit-slider-thumb]:w-[9px] [&::-webkit-slider-thumb]:appearance-none [&::-webkit-slider-thumb]:rounded-b-full [&::-webkit-slider-thumb]:border [&::-webkit-slider-thumb]:border-[#4a6490] [&::-webkit-slider-thumb]:bg-[#dce8f8]"
          />
          <button aria-label="放大"><Icon name="plus" className="size-[17px]" /></button>
        </div>
      </footer>
    </div>
  );
}
